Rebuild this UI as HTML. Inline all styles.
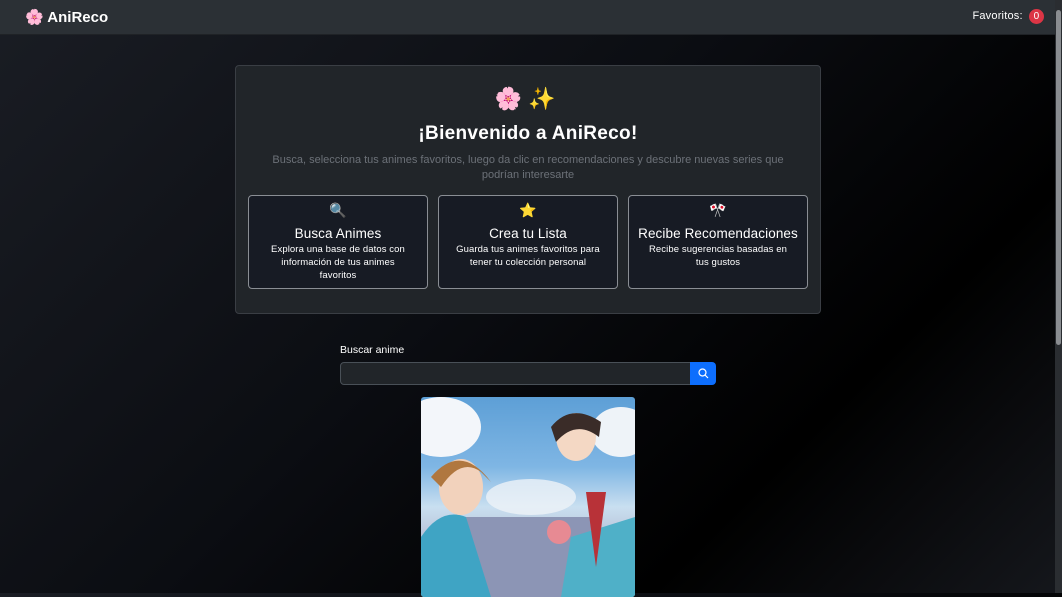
<!DOCTYPE html>
<html><head><meta charset="utf-8"><style>
*{box-sizing:border-box;margin:0;padding:0}
body{width:1062px;height:593px;overflow:hidden;font-family:"Liberation Sans",sans-serif;color:#fff;background:linear-gradient(135deg,#1a1d24 0%,#0b0d12 45%,#000 75%,#15171c 100%);position:relative}
.nav{height:35px;background:#2b3035;border-bottom:1px solid #1f2226;position:relative}
.logo{position:absolute;left:25px;top:8px;font-weight:bold;font-size:15px}
.fav{position:absolute;right:18px;top:9px;font-size:11px;letter-spacing:.2px}
.badge{display:inline-block;background:#dc3545;border-radius:8px;width:15px;height:15px;text-align:center;line-height:15px;font-size:10px;margin-left:3px}
.sb{position:absolute;right:0;top:0;width:7px;height:593px;background:#2a2d31}
.sb i{position:absolute;left:1px;top:10px;width:5px;height:335px;background:#8a8d91;border-radius:3px}
.hero{position:absolute;left:235px;top:65px;width:586px;height:249px;background:#212529;border:1px solid #3a3e44;border-radius:4px;text-align:center}
.em{margin-top:20px;font-size:22px;letter-spacing:6px}
h1{font-size:19px;margin-top:11px;letter-spacing:.3px}
.sub{color:#6c7178;font-size:11px;line-height:15px;margin:8px 8px 0;white-space:nowrap}
.cards{position:absolute;top:129px;left:12px;right:12px;display:flex;gap:10px}
.card{flex:1;height:94px;background:#171b24;border:1px solid #8a8e94;border-radius:4px;padding-top:8px;font-size:9.5px;line-height:13px;letter-spacing:.1px}
.card .ic{font-size:14px;height:20px}
.card b{display:block;font-weight:normal;font-size:13.5px;margin:3px 0 3px}
.lbl{position:absolute;left:340px;top:344px;font-size:10.5px}
.inp{position:absolute;left:340px;top:362px;width:351px;height:23px;background:#212529;border:1px solid #495057;border-radius:4px 0 0 4px}
.btn{position:absolute;left:690px;top:362px;width:26px;height:23px;background:#0d6efd;border-radius:0 4px 4px 0}
.img{position:absolute;left:421px;top:397px;width:214px;height:200px;border-radius:3px;overflow:hidden;background:linear-gradient(180deg,#5d9fd6 0%,#7fb6e4 35%,#c9dff0 55%,#b8c2d8 70%,#d7d0c6 100%)}
</style></head><body>
<div class="nav"><div class="logo">🌸 AniReco</div><div class="fav">Favoritos: <span class="badge">0</span></div></div>
<div class="sb"><i></i></div>
<div class="hero">
<div class="em">🌸✨</div>
<h1>¡Bienvenido a AniReco!</h1>
<div class="sub">Busca, selecciona tus animes favoritos, luego da clic en recomendaciones y descubre nuevas series que<br>podrían interesarte</div>
<div class="cards">
<div class="card"><div class="ic">🔍</div><b>Busca Animes</b>Explora una base de datos con<br>información de tus animes<br>favoritos</div>
<div class="card"><div class="ic">⭐</div><b>Crea tu Lista</b>Guarda tus animes favoritos para<br>tener tu colección personal</div>
<div class="card"><div class="ic">🎌</div><b>Recibe Recomendaciones</b>Recibe sugerencias basadas en<br>tus gustos</div>
</div></div>
<div class="lbl">Buscar anime</div>
<div class="inp"></div>
<div class="btn"><svg width="26" height="23" viewBox="0 0 26 23"><circle cx="12.5" cy="10.5" r="3.5" fill="none" stroke="#fff" stroke-width="1.2"/><path d="M15 13l3 3" stroke="#fff" stroke-width="1.2"/></svg></div>
<div class="img"><svg width="214" height="200" viewBox="0 0 214 200">
<ellipse cx="20" cy="30" rx="40" ry="30" fill="#f3f6fa"/><ellipse cx="200" cy="35" rx="30" ry="25" fill="#eef3f8"/><ellipse cx="110" cy="100" rx="45" ry="18" fill="#eef3f8" opacity=".8"/>
<rect x="40" y="120" width="130" height="80" fill="#8c95b5"/>
<path d="M0 140 Q20 110 45 120 L70 200 L0 200Z" fill="#3fa4c4"/><ellipse cx="40" cy="90" rx="22" ry="28" fill="#f2d2bc"/><path d="M10 80 Q40 45 70 85 L60 75 Q40 60 20 90Z" fill="#b0773f"/>
<path d="M150 140 L214 120 L214 200 L140 200Z" fill="#4fb0c8"/><ellipse cx="155" cy="40" rx="20" ry="24" fill="#f4d8c4"/><path d="M130 30 Q150 5 180 25 L178 40 Q155 22 135 45Z" fill="#3a2c28"/><path d="M165 95 L175 170 L185 95Z" fill="#b83238"/>
<circle cx="138" cy="135" r="12" fill="#e78a93"/>
</svg></div>
</body></html>
